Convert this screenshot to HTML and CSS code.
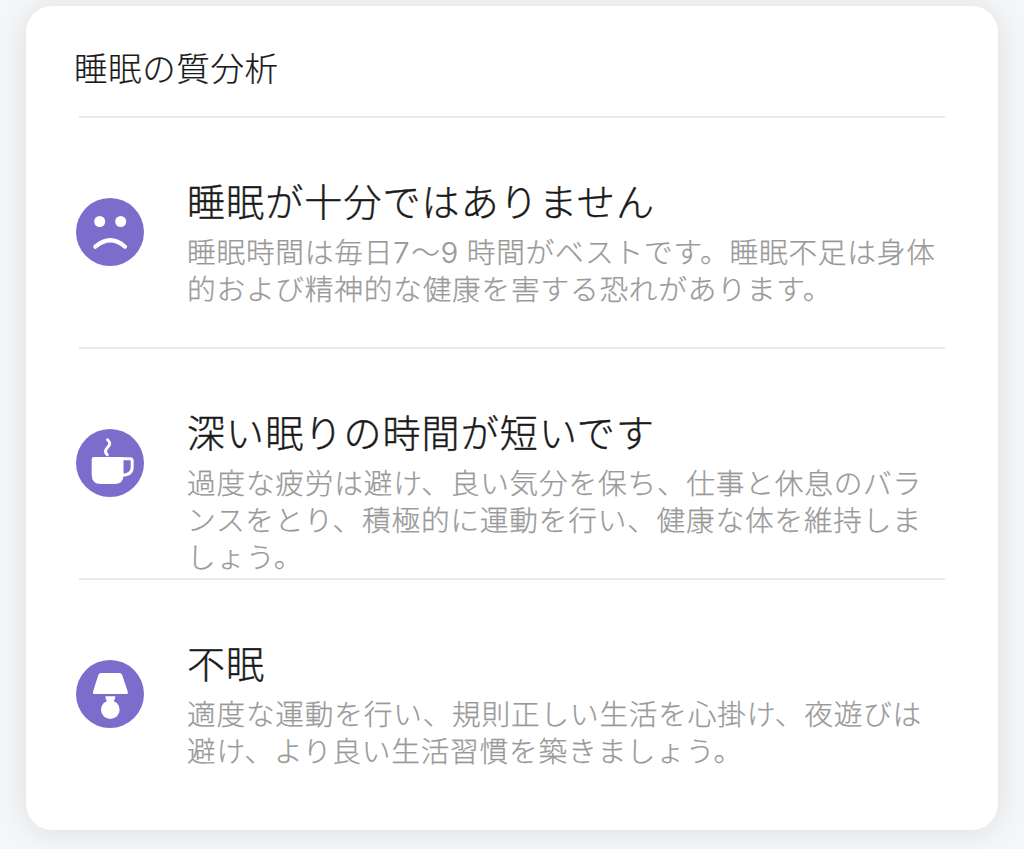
FILE: index.html
```html
<!DOCTYPE html>
<html lang="ja">
<head>
  <meta charset="UTF-8" />
  <meta name="viewport" content="width=device-width, initial-scale=1.0"/>
  <title>睡眠の質分析</title>
  <link rel="stylesheet" href="styles.css">
</head>
<body>
  <main class="card">
    <h1>睡眠の質分析</h1>

    <section class="item">
      <svg class="icon" viewBox="0 0 68 68">
        <circle class="disc" cx="34" cy="34" r="34"/>
        <circle cx="23.7" cy="23.5" r="5.5"/>
        <circle cx="44.7" cy="23.5" r="5.5"/>
        <path class="line" d="M19.3 48.7Q34.5 35.8 49 48.7" stroke-width="4.2"/>
      </svg>
      <div class="text">
        <h2>睡眠が十分ではありません</h2>
        <p>睡眠時間は毎日<span class="num">7</span>〜<span class="num last">9</span>時間がベストです。睡眠不足は身体<br>的および精神的な健康を害する恐れがあります。</p>
      </div>
    </section>

    <section class="item">
      <svg class="icon" viewBox="0 0 68 68">
        <circle class="disc" cx="34" cy="34" r="34"/>
        <path d="M18 28H47.5V46Q47.5 55 38.5 55H25Q15.7 55 15.7 46V30.3Q15.7 28 18 28Z"/>
        <path class="line" d="M46 29.7H54.2Q56.2 29.7 56.2 31.7V38Q56.2 46 46 46.2" stroke-width="3"/>
        <path class="line" d="M31.5 10.8C35.8 14.8 33 16.5 30.8 19.3C28.6 22 29.3 23.8 31.3 25.8" stroke-width="2.9"/>
      </svg>
      <div class="text">
        <h2>深い眠りの時間が短いです</h2>
        <p>過度な疲労は避け、良い気分を保ち、仕事と休息のバラ<br>ンスをとり、積極的に運動を行い、健康な体を維持しま<br>しょう。</p>
      </div>
    </section>

    <section class="item">
      <svg class="icon" viewBox="0 0 68 68">
        <circle class="disc" cx="34" cy="34" r="34"/>
        <path d="M25 13H43.5Q45.5 13 46.2 15L51.7 31.5Q52.5 34.1 50 34.1H19Q16.3 34.1 17.1 31.5L22.3 15Q23 13 25 13Z"/>
        <path d="M29.5 36.2H39.2V38L37.8 41V44H30.8V41L29.5 38Z"/>
        <circle cx="34.3" cy="49.7" r="9.3"/>
      </svg>
      <div class="text">
        <h2>不眠</h2>
        <p>適度な運動を行い、規則正しい生活を心掛け、夜遊びは<br>避け、より良い生活習慣を築きましょう。</p>
      </div>
    </section>
  </main>
</body>
</html>
```
FILE: styles.css
```css
:root {
  --bg: #f5f6f8;
  --text: #1a1a1a;
  --muted: #999999;
  --line: #e9e9e9;
  --accent: #7c6dcc;
}

* {
  box-sizing: border-box;
}

body {
  margin: 0;
  height: 849px;
  padding: 6px 26px 0;
  overflow: hidden;
  background: var(--bg);
  color: var(--text);
  font-family: "Noto Sans CJK JP", sans-serif;
  font-weight: 300;
}

.card {
  height: 824px;
  width: 972px;
  padding: 0 53px;
  border-radius: 26px;
  background: #ffffff;
  box-shadow: 0 2px 30px rgba(0, 0, 0, 0.1);
}

h1 {
  height: 110px;
  margin: 0 0 0 -5px;
  padding-top: 36px;
  font-size: 33.5px;
  font-weight: 300;
  letter-spacing: 0.6px;
  line-height: 50px;
  -webkit-text-stroke: 0.2px;
}

.item {
  display: flex;
  height: 231px;
  border-top: 2px solid var(--line);
}

.icon {
  flex: none;
  width: 68px;
  height: 68px;
  margin: 80px 43px 0 -3px;
  fill: #ffffff;
}

.disc {
  fill: var(--accent);
}

.line {
  fill: none;
  stroke: #ffffff;
  stroke-linecap: round;
}

.text {
  padding-top: 54px;
  white-space: nowrap;
}

h2 {
  margin: 0;
  font-size: 38px;
  font-weight: 300;
  letter-spacing: 1.1px;
  line-height: 56px;
  -webkit-text-stroke: 0.4px;
}

p {
  margin: 5px 0 0;
  color: var(--muted);
  font-size: 28.7px;
  letter-spacing: 0.77px;
  line-height: 36.8px;
  -webkit-text-stroke: 0.25px;
}

.num {
  display: inline-block;
  width: 18px;
  font-family: Inter, sans-serif;
  font-size: 29px;
  font-weight: 300;
  line-height: 1;
}

.last {
  width: 26px;
}
```
